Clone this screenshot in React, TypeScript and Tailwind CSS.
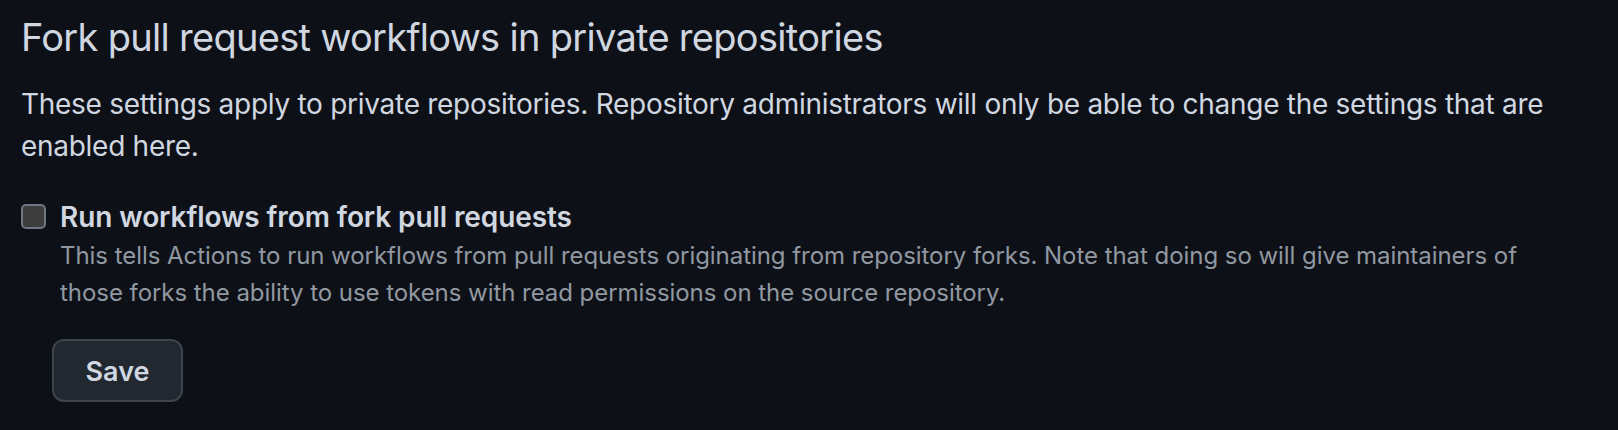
export default function App() {
  return (
    <div
      className="min-h-[430px] w-full bg-[#0d1117] px-[21px] pt-[7px] text-[#d1d7e0]"
      style={{ fontFamily: "Inter, 'Noto Sans', sans-serif" }}
    >
      <h2 className="text-[38px] font-normal leading-[60px] tracking-[-0.7px]">
        Fork pull request workflows in private repositories
      </h2>

      <p className="mt-[16px] max-w-[1560px] text-[28px] leading-[42px] tracking-[-0.28px] text-[#d1d7e0]">
        These settings apply to private repositories. Repository administrators will only be able
        to change the settings that are enabled here.
      </p>

      <div className="mt-[31px] flex items-start gap-[14px]">
        <input
          type="checkbox"
          className="mt-[6px] h-[25px] w-[25px] shrink-0 appearance-none rounded-[5px] border-2 border-[#6e7681] bg-[#3d3d3d]"
        />
        <div className="flex flex-col">
          <label className="text-[28px] font-semibold leading-[38px] tracking-[-0.1px] text-[#d1d7e0]">
            Run workflows from fork pull requests
          </label>
          <p className="mt-[1px] max-w-[1480px] text-[24px] leading-[37px] tracking-[-0.05px] text-[#9198a1]">
            This tells Actions to run workflows from pull requests originating from repository
            forks. Note that doing so will give maintainers of those forks the ability to use tokens
            with read permissions on the source repository.
          </p>
        </div>
      </div>

      <div className="pl-[31px] pt-[28px]">
        <button
          type="button"
          className="h-[63px] w-[131px] rounded-[12px] border-2 border-[#3d444d] bg-[#212830] pt-[3px] text-[27px] font-semibold text-[#d1d7e0]"
        >
          Save
        </button>
      </div>
    </div>
  );
}
